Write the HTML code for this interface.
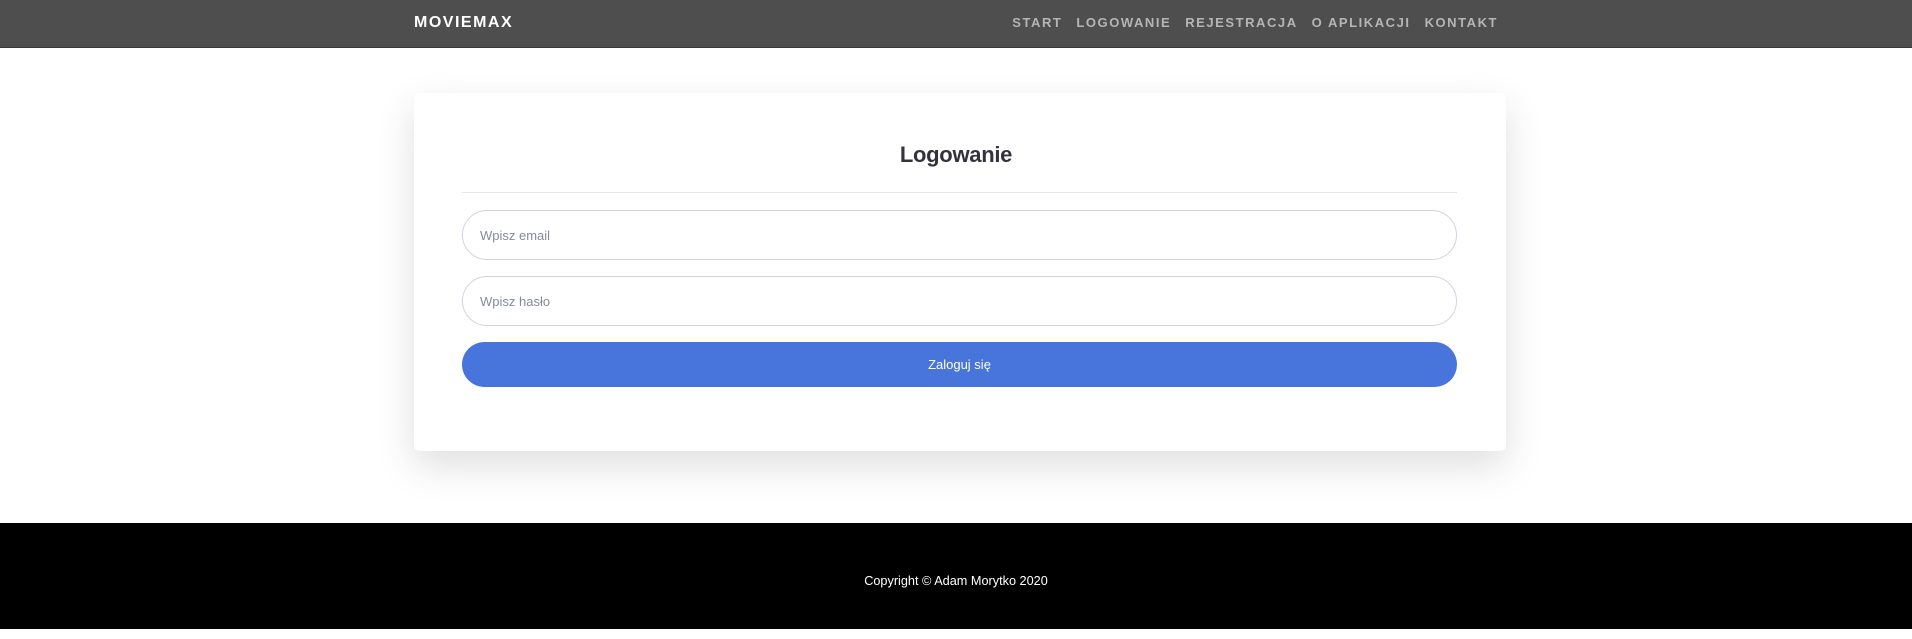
<!DOCTYPE html>
<html><head><meta charset="utf-8"><style>
*{box-sizing:border-box;margin:0;padding:0}
body{width:1912px;height:629px;overflow:hidden;background:#fff;font-family:"Liberation Sans",sans-serif;position:relative}
.nav{position:absolute;left:0;top:0;width:1912px;height:48px;background:#4e4e4e;border-bottom:1px solid #3a3a3a}
.brand{position:absolute;left:414px;top:14px;color:#fff;font-weight:bold;font-size:16px;letter-spacing:1.5px}
.links{position:absolute;right:414px;top:15px;font-size:13px;font-weight:bold;letter-spacing:1.55px;color:#b5b5b5;white-space:nowrap}
.links span{margin-left:14px}
.card{position:absolute;left:414px;top:93px;width:1092px;height:358px;background:#fff;border-radius:5px;box-shadow:0 15px 40px rgba(0,0,0,0.13)}
h1{position:absolute;left:0;width:100%;top:142px;text-align:center;font-size:22px;color:#33333d;font-weight:bold;letter-spacing:-0.3px}
.hr{position:absolute;left:462px;width:995px;top:192px;height:1px;background:#e3e3e8}
.in{position:absolute;left:462px;width:995px;height:50px;border:1px solid #d4d2e2;border-radius:25px;font-size:13px;color:#858aa0;padding:17px 0 0 17px}
.btn{position:absolute;left:462px;width:995px;top:342px;height:45px;border-radius:23px;background:#4775dc;color:#fff;font-size:13px;text-align:center;line-height:45px}
.foot{position:absolute;left:0;top:523px;width:1912px;height:106px;background:#000;color:#fff;font-size:12.7px;text-align:center;line-height:116px}
</style></head><body>
<div class="nav"><div class="brand">MOVIEMAX</div><div class="links"><span>START</span><span>LOGOWANIE</span><span>REJESTRACJA</span><span>O APLIKACJI</span><span>KONTAKT</span></div></div>
<div class="card"></div>
<h1>Logowanie</h1>
<div class="hr"></div>
<div class="in" style="top:210px">Wpisz email</div>
<div class="in" style="top:276px">Wpisz hasło</div>
<div class="btn">Zaloguj się</div>
<div class="foot">Copyright © Adam Morytko 2020</div>
</body></html>
